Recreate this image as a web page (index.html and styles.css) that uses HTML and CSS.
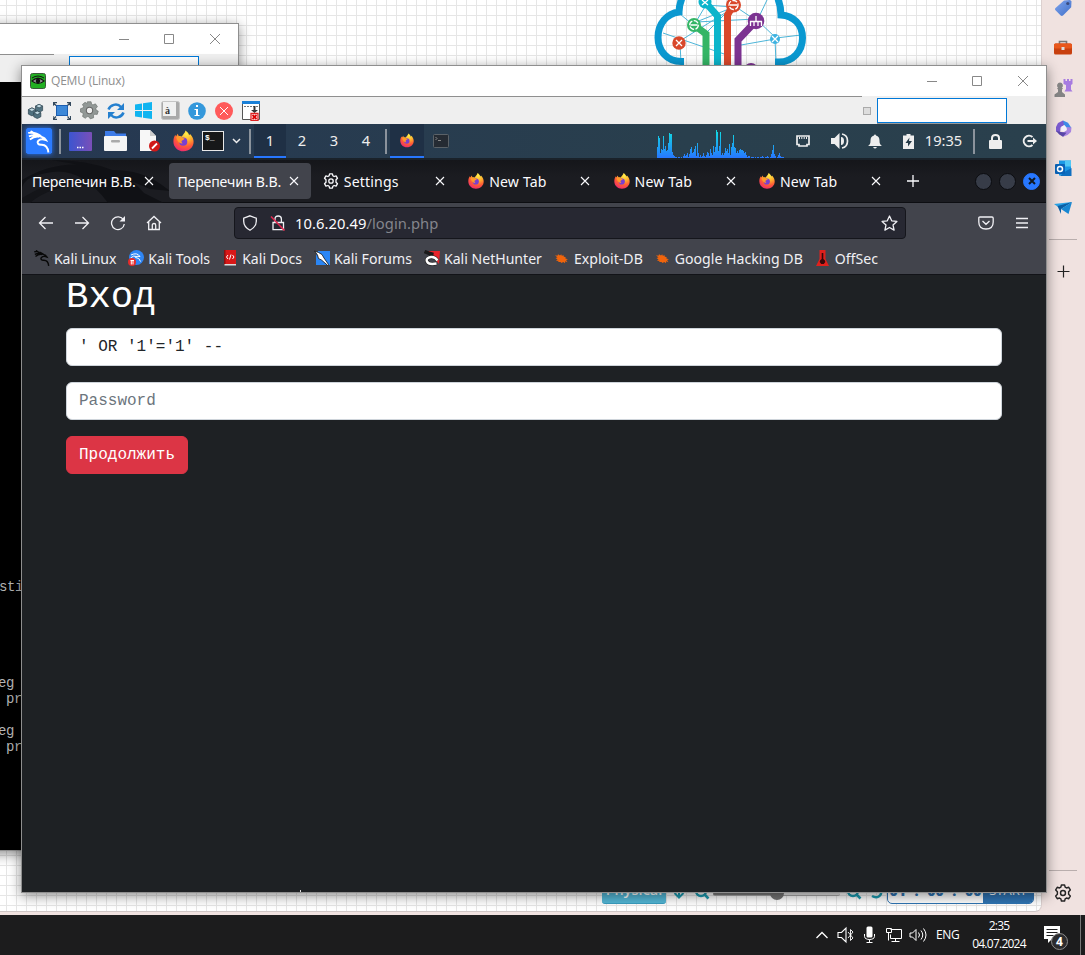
FILE: index.html
```html
<!DOCTYPE html>
<html lang="ru">
<head>
<meta charset="utf-8">
<title>QEMU (Linux)</title>
<link rel="stylesheet" href="styles.css">
</head>
<body>
<svg class="defs" width="0" height="0">
  <defs>
    <radialGradient id="fox" cx=".65" cy=".15" r=".95"><stop offset="0" stop-color="#fff04a"/><stop offset=".35" stop-color="#ffb02e"/><stop offset=".65" stop-color="#ff5a36"/><stop offset="1" stop-color="#e8207c"/></radialGradient>
    <linearGradient id="desk"><stop offset="0" stop-color="#3c55d0"/><stop offset="1" stop-color="#7a4fb8"/></linearGradient>
    <linearGradient id="cpu" gradientUnits="userSpaceOnUse" x1="0" y1="0" x2="0" y2="28"><stop offset="0" stop-color="#10e0e0"/><stop offset="1" stop-color="#2777ff"/></linearGradient>
    <linearGradient id="tagc" x1="0" y1="0" x2="1" y2="1"><stop offset="0" stop-color="#7fa4ee"/><stop offset="1" stop-color="#3f6fc8"/></linearGradient>
  </defs>
  <symbol id="firefox" viewBox="0 0 16 16">
    <path fill="url(#fox)" d="M8 15.800C3.600 15.800.3 12.600.3 8.300c0-2.300.7-4 1.500-5l.5 1.300L3.600 2.500l.8 1.800c.8-.2 1.600 0 2.300.3C7.500 3 9 2.300 9.500 0c1.700 1.200 2.500 2.200 2.800 3.600l.7-1c2 2 2.700 4 2.700 6 0 4.200-3.400 7.200-7.700 7.200z"/>
    <circle cx="7.800" cy="8.500" r="3.100" fill="#7a3fd0"/>
    <path fill="#ff9a2a" d="M2.500 4.800c1.300-.6 3-.4 4.200.6.6.5 1.200.5 2.200.6-.4 1-1.500 1.200-2 1.600-.8.500-.4 1.800.6 2.200-2 .6-4.300-1.200-5-5z"/>
  </symbol>
  <symbol id="x" viewBox="0 0 10 10"><path d="M1 1l8 8M9 1L1 9" fill="none" stroke="currentColor" stroke-width="1.100"/></symbol>
  <symbol id="gear" viewBox="0 0 16 16">
    <path fill="none" stroke="currentColor" stroke-width="1.300" stroke-linejoin="round" d="M6.600.8h2.800l.5 2 1.200.7 2-.6 1.400 2.400-1.500 1.500v2.400l1.500 1.500-1.400 2.400-2-.6-1.200.7-.5 2H6.600l-.5-2-1.200-.7-2 .6-1.400-2.400L3 9.200V6.800L1.500 5.300l1.400-2.400 2 .6 1.200-.7z"/>
    <circle cx="8" cy="8" r="2.200" fill="none" stroke="currentColor" stroke-width="1.300"/>
  </symbol>
  <symbol id="dragon" viewBox="0 0 16 16">
    <path fill="none" stroke="currentColor" stroke-width="1.400" d="M.3 1.800C4 1.300 7 2 9.500 4.200M.8 4.300C4 3 7 3.300 10 4.700c1.300.5 2.300 1 3 2.300-2-.8-4.500-.6-5.500.4-1.300 1.500 0 3 2.200 2.900 2.600-.1 4.600 1.800 5 5.500M2 .5l3 2M1.500 6.500C4 4.500 6 4.200 8 4.500"/>
  </symbol>
  <symbol id="bug" viewBox="0 0 16 16">
    <path fill="#f0640c" d="M1 5.200l2.500.6L4 4.200 6 5.500l1.200-1.200.6 1.400 1.800-.4.2 1.400 1.800.4-.2 1.400 2.600.8-1.900.7 1.400 2.300-2.300-1-.2 1.900-1.700-1.300-1.800 1.200-1-1.200-2.300.2.300-1.400-2.500.3L3.500 9.500 1.500 8l2-.4z"/>
  </symbol>
</svg>
<div class="desktop">
  <main class="backdrop">
    <section class="canvas">
      <svg class="cloud" width="160" height="72" viewBox="650 0 160 72" fill="none">
        <g stroke="#4db5d8" stroke-width="1"><path d="M663 33l67 23M694 25l12-20 28 2-38 15 60-3 20 19 25-3M680 14l12 10M680 43l1 20M683 39l50-31M706 33l24-24M741 45l34-6M775 39l1 24M733 5l24 16 10-21"/></g>
        <path stroke="#0a98d0" stroke-width="7" d="M684 61.500h-3c-14 0-23-11-23-24 0-14 9-24 21-25.500 0-5 1-9 3-14M775 62h4c14 0 23.500-11 23.500-24 0-14-9-22-21.500-23 0-6-1-11-3-16"/>
        <path stroke="#34b565" stroke-width="7" d="M694 25l12 9v38"/><path stroke="#0cb5cb" stroke-width="7" d="M705 2l12.500 14v56"/>
        <path stroke="#d9482b" stroke-width="7" d="M734 4l-6.500 11v57"/><path stroke="#7c3391" stroke-width="7" d="M756 21l-18 19v32"/>
        <circle cx="694" cy="25" r="7" fill="#34b565"/><circle cx="705" cy="2" r="6.500" fill="#0cb5cb"/><circle cx="733.500" cy="5" r="7.500" fill="#d9482b"/><circle cx="756" cy="21" r="8.300" fill="#7c3391"/><circle cx="679" cy="43" r="6.700" fill="#d9482b"/><circle cx="775" cy="39" r="5" fill="#3db2e0"/><circle cx="751" cy="70" r="7" fill="#7c3391"/>
        <g stroke="#fff" stroke-width="1.300"><circle cx="694" cy="25" r="4.300" stroke-dasharray="5 1.500"/><circle cx="733.500" cy="5" r="4.500" stroke-dasharray="5 1.500"/><path d="M676 40l6 6M682 40l-6 6M702 0l6 5M708 0l-6 5M772 36l6 6M778 36l-6 6M690.500 25h7M730 5h7M756 16v5M750 21.500h12M750.500 21v5M754 21v5M758 21v5M761.500 21v5"/></g>
      </svg>
      <div class="pt-bar">
        <span class="pt-physical">Physical</span>
        <svg class="pt-pin" width="12" height="22" viewBox="0 0 12 22" fill="none" stroke="#1b9bb0" stroke-width="2"><path d="M6 0v15M1.500 11L6 15.500l4.500-4.500"/></svg>
        <svg class="pt-zoom" width="16" height="22" viewBox="0 0 16 22" fill="none" stroke="#1b9bb0" stroke-width="2.500"><circle cx="7" cy="9" r="5"/><path d="M10.500 12.500l4 4"/></svg>
        <span class="pt-slider"><i></i></span>
        <svg class="pt-zoom" width="16" height="22" viewBox="0 0 16 22" fill="none" stroke="#1b9bb0" stroke-width="2.500"><circle cx="7" cy="9" r="5"/><path d="M10.500 12.500l4 4"/></svg>
        <svg class="pt-undo" width="14" height="22" viewBox="0 0 14 22" fill="none" stroke="#1b9bb0" stroke-width="2.500"><path d="M2 14c5 3 10 0 9-5-1-4-5-5-8-3"/></svg>
        <span class="pt-timer"><b>01 : 00 : 00</b><em>START</em></span>
      </div>
    </section>
    <aside class="edge-side">
      <div class="slot"><svg width="18" height="18" viewBox="0 0 18 18"><path fill="url(#tagc)" d="M10 1.500L16 1l1.500 1.200-.3 6L9 16.500c-.8.7-1.700.6-2.300 0L1.500 11.300c-.7-.7-.6-1.700 0-2.300z"/><circle cx="13.800" cy="4.500" r="1.600" fill="#3a4c80"/></svg></div>
      <div class="slot"><svg width="18" height="16" viewBox="0 0 18 16"><path d="M5.500 4V1.500h7V4" fill="none" stroke="#777" stroke-width="1.600"/><rect y="3.500" width="18" height="11" rx="1.500" fill="#c8400f"/><rect y="3.500" width="18" height="5" rx="1.500" fill="#e8571c"/><rect x="7.500" y="7" width="3" height="3" fill="#ddd"/></svg></div>
      <div class="slot"><svg width="19" height="18" viewBox="0 0 19 18"><path fill="#a77be0" d="M9.500 0h2v2H13V0h2v2h1.500V0h2v5l-1.500 1v4.500l1.500 2h-8L12 10V6L9.500 5z"/><path fill="#858585" d="M6 3.500a3 3 0 012 5.200l1 .8-1 1V13l3 2.500V18H.5v-2.500L4 13v-2.500l-1-1 1-.8a3 3 0 012-5.200z"/></svg></div>
      <div class="slot"><svg width="17" height="17" viewBox="0 0 17 17"><path fill="#3f8be8" d="M8 .5l5 2.300 3.300 5-3.800 1.200L9.500 5 6 5.500z"/><path fill="#7b5bd0" d="M8 .5L3 3 1 7v4.500l4 2 .5-6L9 5z"/><path fill="#a884e0" d="M11.500 7l5 .5-.5 4.500-3.500 3L8 16.800 5 13l4-1 3-2z"/><path fill="#5947a8" d="M1.200 11l3 3.500L8 16.800l3.500-4L6 12z"/><path fill="#f4f0fb" d="M6.500 6.500L9 5.500l2.500 2-.3 3-2.700 1.300L6 10.500z"/></svg></div>
      <div class="slot"><svg width="17" height="17" viewBox="0 0 17 17"><path fill="#1a9ae6" d="M4 .5h12v15H4z"/><path fill="#50c8f5" d="M10 .5h6v6h-6z"/><path fill="#0f6fc0" d="M5 16l6-5 5.500-3v8z"/><rect y="4" width="10" height="10" rx="1" fill="#0a63b8"/><circle cx="5" cy="9" r="2.500" fill="none" stroke="#fff" stroke-width="1.500"/></svg></div>
      <div class="slot"><svg width="18" height="15" viewBox="0 0 18 15"><path fill="#2aa4e8" d="M0 3L18 1 7 8z"/><path fill="#0b5fa5" d="M3.500 5L18 1 7 8v5z"/><path fill="#1787d2" d="M18 1l-3.500 12L7 8z"/></svg></div>
      <hr>
      <div class="plus"><svg width="13" height="13" viewBox="0 0 13 13"><path d="M6.500.5v12M.5 6.500h12" stroke="#222" stroke-width="1.200"/></svg></div>
      <div class="grow"></div>
      <hr>
      <div class="cog"><svg width="18" height="18"><use href="#gear"/></svg></div>
    </aside>
  </main>
  <footer class="taskbar">
    <svg width="24" height="20" viewBox="0 0 24 20" fill="none" stroke="#fff" stroke-width="1.300"><path d="M6.500 13L12 7.500l5.500 5.500"/></svg>
    <svg width="24" height="20" viewBox="0 0 24 20" fill="none" stroke="#fff" stroke-width="1.100"><path d="M4 7.500h3.500L12 3v14l-4.500-4.500H4z"/><path stroke-width=".9" d="M14 7l5 6-2.500 2.500v-11L19 7l-5 6"/></svg>
    <svg width="24" height="20" viewBox="0 0 24 20"><rect x="8.500" y="1.500" width="6" height="11" rx="1.500" fill="#fff"/><path d="M6.500 9v2.500c0 4 10 4 10 0V9M11.500 14.500v3M8.500 17.500h6" fill="none" stroke="#fff"/></svg>
    <svg width="24" height="20" viewBox="0 0 24 20" fill="none" stroke="#fff"><path d="M8.500 4.500h11v9h-11v-4M13.500 13.500v3M9.500 16.500h8"/><path d="M4.500 3.500h5v4h-5zM6.500 7.500v8"/></svg>
    <svg width="24" height="20" viewBox="0 0 24 20" fill="none" stroke="#fff"><path d="M4 8h2.500L10 4.500v11L6.500 12H4zM12.500 7.500q2 2.500 0 5M15 5.500q3.500 4.500 0 9M17.500 3.500q5 6.500 0 13"/></svg>
    <span class="lang">ENG</span>
    <span class="date">2:35<br>04.07.2024</span>
    <svg class="notify" width="26" height="28" viewBox="0 0 26 28"><path fill="#fff" d="M0 2h16v13H8l-4 4v-4H0z"/><path d="M2.500 5.500h11M2.500 8.500h11M2.500 11.500h7" stroke="#1c1c1d"/><circle cx="15.500" cy="17.500" r="8" fill="#2c2c2e" stroke="#8c8c8c"/><text x="15.500" y="22" class="count">4</text></svg>
    <i class="peek"></i>
  </footer>

  <section class="win win-back">
    <header class="caption"><span class="title"></span>
      <svg class="ctl" width="106" height="14" viewBox="0 0 106 14"><path d="M1 7.500h10M46.500 2.500h9v9h-9zM92 2l10 10M102 2L92 12" fill="none" stroke="#888"/></svg>
    </header>
    <div class="back-tools"><i class="field"></i></div>
    <div class="console">
      <div class="first">sti</div>
      <div class="in">eg</div>
      <div class="in pr">pr</div>
      <div class="in gap">eg</div>
      <div class="in pr">pr</div>
    </div>
  </section>

  <section class="win win-main">
    <header class="caption">
      <svg width="16" height="16" viewBox="0 0 16 16"><rect x=".5" y=".5" width="15" height="15" rx="2" fill="#22b022" stroke="#3a5a3a"/><path d="M1 8q7-7 14 0-7 6-14 0z" fill="#111"/><path d="M3 8q5-4 10 0-5 4-10 0z" fill="#9a9a9a"/><circle cx="8" cy="8" r="2.300" fill="#111"/><path d="M2 5q6-4 12 0" fill="none" stroke="#111"/></svg>
      <span class="title">QEMU (Linux)</span>
      <svg class="ctl" width="106" height="14" viewBox="0 0 106 14"><path d="M1 7.500h10M46.500 2.500h9v9h-9zM92 2l10 10M102 2L92 12" fill="none" stroke="#888"/></svg>
    </header>
    <div class="rule"></div>
    <div class="tools">
      <i><svg width="17" height="16" viewBox="0 0 18 18" stroke="#2d4450" stroke-width=".8"><path fill="#50717f" d="M9 3.500l4-2 4 2v5l-4 2-4-2z"/><path fill="#c3dbe4" d="M9 3.500l4-2 4 2-4 2z"/><path fill="#50717f" d="M1 7.500l4-2 4 2v5l-4 2-4-2z"/><path fill="#c3dbe4" d="M1 7.500l4-2 4 2-4 2z"/><path fill="#50717f" d="M7 11l4-2 4 2v4.500l-4 2-4-2z"/><path fill="#c3dbe4" d="M7 11l4-2 4 2-4 2z"/></svg></i>
      <i><svg width="18" height="18" viewBox="0 0 18 18"><rect x="3.500" y="3.500" width="11" height="10" fill="#3d88d8" stroke="#1c5db0"/><path d="M0 4V.5h4M14 .5h3.500V4M0 14v3.500h4M14 17.500h3.500V14M0 .5l3 3M17.500.5l-3 3M0 17.500l3-3M17.500 17.500l-3-3" stroke="#34495e" stroke-width="1.300" fill="none"/></svg></i>
      <i><svg width="19" height="19" viewBox="0 0 18 18"><path fill="#929896" stroke="#656b69" stroke-width=".6" d="M7 .7h3.500l.5 2.400 1.300.6 2.300-1 1.900 2.600-1.500 1.800.3 1.500 2 1-1 3.100-2.300-.2-1.200 1 .1 2.400-3.200 1-1.400-2-1.600-.1-1.700 1.600-2.600-1.800.7-2.300-.7-1.200L.5 10.500V7.300l2.300-.7.600-1.300-1.100-2 2.500-2 2 1.200z"/><circle cx="9" cy="9" r="3" fill="#efefef" stroke="#666"/></svg></i>
      <i><svg width="18" height="18" viewBox="0 0 18 18" fill="none" stroke="#2580cf" stroke-width="2.500"><path d="M1.500 7.500C3 3 10 .5 14 5M16.500 10.500C15 15 8 17.500 4 13"/><path fill="#2580cf" stroke="none" d="M17 1v7h-7zM1 17v-7h7z"/></svg></i>
      <i><svg width="17" height="17" viewBox="0 0 17 17" fill="#10b4f0"><path d="M0 2.500l7-1V8H0zM8 1.300L17 0v8H8zM0 9h7v6.500l-7-1zM8 9h9v8l-9-1.300z"/></svg></i>
      <i><svg width="19" height="19" viewBox="0 0 19 19"><rect x=".5" y=".5" width="18" height="18" rx="2" fill="#a9a9a9" stroke="#c5c5c5"/><path fill="#f0f0f0" d="M2 1h13v14H2z"/><text x="4" y="12.500" class="key">à</text></svg></i>
      <i><svg width="18" height="18" viewBox="0 0 18 18"><circle cx="9" cy="9" r="8.800" fill="#3498db"/><path fill="#fff" d="M8 3h2v2H8zM6.500 7H10v6h1.500v1h-5v-1H8V8H6.500z"/></svg></i>
      <i><svg width="18" height="18" viewBox="0 0 18 18"><circle cx="9" cy="9" r="9" fill="#ff5a5a"/><path d="M5 5l8 8M13 5l-8 8" stroke="#fff"/></svg></i>
      <i class="last"><svg width="19" height="20" viewBox="0 0 19 20"><path fill="#fff" stroke="#555" d="M.5 1.500h17v17H.5z"/><path fill="#1a80d8" d="M0 0h18v3H0z"/><path d="M2 5.500h14" stroke="#777" stroke-dasharray="2 1"/><path fill="#333" d="M11.500 5h2v4H16l-3.500 3L9 9h2.500z"/><path fill="#fff" stroke="#d22" stroke-width="1.300" d="M9 12.500h7v7H9z"/><path d="M10.500 14l4 4M14.500 14l-4 4" stroke="#d00" stroke-width="1.800"/></svg></i>
      <b class="mini"></b><b class="field"></b>
    </div>

    <div class="panel">
      <span class="w34"><svg class="kali" width="26" height="26" viewBox="-3 -3 22 22"><rect x="-3" y="-3" width="22" height="22" rx="1.500" fill="#2b7bff"/><g color="#fff"><use href="#dragon" x="-2" y="-1" width="20" height="19"/></g></svg></span>
      <i class="sep s1"></i>
      <span class="w35"><svg width="23" height="19" viewBox="0 0 23 19"><rect width="23" height="19" rx="1" fill="url(#desk)"/><path d="M8 15.500h7" stroke="#fff" stroke-width="1.500" stroke-dasharray="1.500 1"/></svg></span>
      <span class="w34"><svg width="23" height="20" viewBox="0 0 23 20"><path fill="#3d7be8" d="M1 0h9l2 2.500h10V10H1z"/><rect y="5" width="23" height="15" rx="1" fill="#f5f5f5"/><rect x="7" y="9" width="9" height="2.500" rx="1" fill="#aaa"/></svg></span>
      <span class="w34"><svg width="21" height="22" viewBox="0 0 21 22"><path fill="#f7f7f7" d="M1 0h10l6 6v15H1z"/><path fill="#ccc" d="M11 0l6 6h-6z"/><circle cx="15.500" cy="16" r="5.500" fill="#d01818"/><path d="M13 18.500l5-5" stroke="#fff" stroke-width="1.800"/></svg></span>
      <span class="w34"><svg width="21" height="22"><use href="#firefox"/></svg></span>
      <span class="w26"><svg width="22" height="20" viewBox="0 0 22 20"><rect x=".5" y=".5" width="21" height="19" fill="#171819" stroke="#e8e8e8"/><text x="3" y="9" class="prompt">$_</text></svg></span>
      <span class="w20"><svg width="9" height="6" viewBox="0 0 9 6"><path d="M1 1l3.500 3.500L8 1" fill="none" stroke="#eee" stroke-width="1.500"/></svg></span>
      <i class="sep s2"></i>
      <span class="ws on">1</span><span class="ws">2</span><span class="ws">3</span><span class="ws">4</span>
      <i class="sep s2"></i>
      <span class="w34 on"><svg width="14" height="15"><use href="#firefox"/></svg></span>
      <span class="w34"><svg width="16" height="14" viewBox="0 0 16 14"><rect x=".5" y=".5" width="15" height="13" rx="1" fill="#252b33" stroke="#5b6268"/><path d="M2.500 3l1.500 1.500L2.500 6M5 6.500h3" stroke="#888" fill="none"/></svg></span>
      <span class="grow"></span>
      <svg class="graph" width="128" height="34" viewBox="0 -6 128 34"><path fill="url(#cpu)" d="M0 28V17h1V6h1V8h1V23h1V19h1V20h1V6h1V19h1V16h1V21h1V20h1V13h1V3h1V4h2V22h1V25h1V26h1V27h2V28h1V27h2V28h1V27h1V28h1V26h1V24h1V26h1V25h1V23h1V27h1V24h1V19h1V17h1V23h1V22h1V19h1V16h1V26h1V13h1V23h1V27h1V25h1V27h1V26h1V23h1V26h1V27h1V25h1V22h1V23h1V26h1V19h1V23h1V25h1V16h1V22h1V17h1V0h1V2h1V21h1V16h1V2h1V25h1V23h1V25h1V23h1V18h1V21h1V19h1V23h1V14h1V25h1V17h1V13h1V5h1V17h1V18h1V23h1V21h1V23h1V20h1V19h1V20h2V21h1V23h1V22h1V25h1V27h1V26h2V28h1V27h3V28h1V27h1V28h1V27h2V28h1V27h2V26h1V27h1V28h1V27h2V26h1V27h1V28h1V27h1V24h1V20h1V15h1V24h1V26h1V28h1V27h1V25h1V23h1V26h1V27h3V28z"/></svg>
      <span class="w36"><svg width="14" height="13" viewBox="0 0 14 13"><path fill="none" stroke="#eee" stroke-width="1.700" d="M1 1h12v8.500h-2V11H3V9.500H1z"/><path d="M3.500 2v2M5.800 2v2M8.200 2v2M10.500 2v2" stroke="#eee"/></svg></span>
      <span class="w37"><svg width="18" height="16" viewBox="0 0 18 16"><path fill="#eee" d="M0 5h3.500L8.500 0v16l-5-5H0zM10 4q3 0 3 4t-3 4z"/><path d="M11 1q5.500 1 5.500 7T11 15" fill="none" stroke="#eee" stroke-width="1.700"/></svg></span>
      <span class="w34"><svg width="14" height="15" viewBox="0 0 14 15"><path fill="#eee" d="M6 1.500a1 1 0 012 0c2.500.5 3.500 2.500 3.500 5 0 3 .5 4 2.500 5.500H0c2-1.500 2.500-2.500 2.500-5.500 0-2.500 1-4.500 3.500-5zM5 13h4q-2 3-4 0z"/></svg></span>
      <span class="w32"><svg width="11" height="15" viewBox="0 0 11 15"><path fill="#eee" d="M3.500 0h4v1.500H11V15H0V1.500h3.500z"/><path fill="#263b48" d="M6.500 3.500L2.500 9H5v3.500L9 7H6z"/></svg></span>
      <span class="clock">19:35</span>
      <i class="sep s3"></i>
      <span class="w28"><svg width="13" height="15" viewBox="0 0 13 15"><rect y="6" width="13" height="9" rx="1" fill="#eee"/><path d="M3 7V4q0-3 3.500-3T10 4v3" fill="none" stroke="#eee" stroke-width="2"/></svg></span>
      <span class="out"><svg width="15" height="14" viewBox="0 0 15 14"><path d="M10.500 3A5.300 5.300 0 1010.500 11" fill="none" stroke="#eee" stroke-width="2"/><path fill="#eee" d="M5.500 6H11V3.500L15 7l-4 3.500V8H5.500z"/></svg></span>
    </div>

    <div class="tabs">
      <svg class="wall" width="160" height="43" viewBox="0 0 160 43"><path fill="#101115" d="M0 20Q30 2 62 5q40 4 60 28l20 10H86Q60 8 30 12T0 30zM30 0q35 0 60 10 30 0 50 15l8 6-20-2Q90 12 58 5z"/><path fill="#141519" d="M0 38Q40 14 78 20l-10 6Q30 24 8 43H0z"/></svg>
      <div class="tab"><span class="cyr">Перепечин В.В.</span><svg width="10" height="10"><use href="#x"/></svg></div>
      <div class="tab active"><span class="cyr">Перепечин В.В.</span><svg width="10" height="10"><use href="#x"/></svg></div>
      <div class="tab"><svg class="fav" width="16" height="16"><use href="#gear"/></svg><span>Settings</span><svg width="10" height="10"><use href="#x"/></svg></div>
      <div class="tab"><svg class="fav" width="16" height="16"><use href="#firefox"/></svg><span>New Tab</span><svg width="10" height="10"><use href="#x"/></svg></div>
      <div class="tab"><svg class="fav" width="16" height="16"><use href="#firefox"/></svg><span>New Tab</span><svg width="10" height="10"><use href="#x"/></svg></div>
      <div class="tab"><svg class="fav" width="16" height="16"><use href="#firefox"/></svg><span>New Tab</span><svg width="10" height="10"><use href="#x"/></svg></div>
      <svg class="new" width="12" height="12" viewBox="0 0 12 12"><path d="M6 0v12M0 6h12" stroke="#fbfbfe" stroke-width="1.300"/></svg>
      <span class="grow"></span>
      <b class="dot"></b><b class="dot"></b><b class="dot close"><svg width="8" height="8" viewBox="0 0 8 8"><path d="M1 1l6 6M7 1L1 7" stroke="#101820" stroke-width="2"/></svg></b>
    </div>

    <div class="nav">
      <i><svg width="16" height="16" viewBox="0 0 16 16"><path d="M15 8H1.500M7.500 2l-6 6 6 6"/></svg></i>
      <i><svg width="16" height="16" viewBox="0 0 16 16"><path d="M1 8h13.500M8.500 2l6 6-6 6"/></svg></i>
      <i><svg width="16" height="16" viewBox="0 0 16 16"><path d="M13.500 5A6.400 6.400 0 1014.300 9"/><path class="solid" d="M15 1v5.500H9.500z"/></svg></i>
      <i><svg width="16" height="16" viewBox="0 0 16 16"><path d="M1 8l7-6.500L15 8M2.700 7v7.500h10.600V7M6.300 14.500V10q0-1.500 1.700-1.500T9.700 10v4.500"/></svg></i>
      <div class="url">
        <svg width="16" height="16" viewBox="0 0 16 16"><path d="M8 .8l6.300 2.400v3q0 5.500-6.300 9-6.300-3.500-6.300-9v-3z"/></svg>
        <svg class="lock" width="16" height="16" viewBox="0 0 16 16"><path d="M3 7.500h10.500v7.200H3zM5 7V4q0-3 3.200-3t3.200 3v3"/><path d="M1 1.500l13.500 14" stroke="#e22850" stroke-width="1.600"/></svg>
        <span>10.6.20.49<em>/login.php</em></span>
        <svg class="star" width="17" height="17" viewBox="0 0 17 17"><path stroke-linejoin="round" d="M8.500 1l2.200 4.800 5.200.6-3.900 3.500 1.100 5.200-4.600-2.600-4.600 2.600L5 9.900 1.100 6.400l5.200-.6z"/></svg>
      </div>
      <span class="grow"></span>
      <i><svg width="16" height="14" viewBox="0 0 16 14"><path d="M2 1h12q1.200 0 1.200 1.200V6q0 7-7.200 7T.8 6V2.200Q.8 1 2 1zM4.500 5L8 8.300 11.500 5"/></svg></i>
      <i><svg width="12" height="12" viewBox="0 0 12 12"><path d="M0 1.500h12M0 6h12M0 10.500h12"/></svg></i>
    </div>
    <div class="marks">
      <span class="black"><svg width="16" height="16"><use href="#dragon"/></svg>Kali Linux</span>
      <span><svg width="16" height="16" viewBox="0 0 16 16"><circle cx="8.500" cy="7.500" r="7.500" fill="#2f86f5"/><path d="M3 5q6-3 9 1.500-4-1-4.500 1 4 0 5 4M2.500 8q3-3 6-1.500" stroke="#fff" fill="none"/><circle cx="4" cy="12" r="4" fill="#e62b2b"/><path d="M2.500 10.500h3.500M3.300 10.500v4M5 10.500v4" stroke="#fff"/></svg>Kali Tools</span>
      <span><svg width="16" height="16" viewBox="0 0 16 16"><path fill="#d81818" d="M2 0h12v14H2z"/><path fill="#8c1010" d="M2 0h1.500v15H2z"/><path fill="#ddd" d="M2.500 14H14v1.500H2.500z"/><path d="M6 5L4.500 7 6 9M10.500 5L12 7l-1.500 2M9 4.500l-1.500 5" stroke="#fff" fill="none"/></svg>Kali Docs</span>
      <span><svg width="16" height="16" viewBox="0 0 16 16"><path fill="#2b86f5" d="M4 1h12v14H2V6z"/><path fill="#fff" stroke="#111" stroke-width=".8" d="M.5 1l4 1.500L8 4.500l2 3.500 4.500 6.500-1 .8L7.500 10 4.500 8.500 3.500 5z"/></svg>Kali Forums</span>
      <span><svg width="16" height="16" viewBox="0 0 16 16"><path fill="#e8252c" d="M4 1h12l-1 13z"/><path d="M.5 1.500q4 2 9 3M12.500 13.500q-8 1.500-9.500-2t4-4.500q4-.5 6.500 3.500" stroke="#1a1a1a" stroke-width="3.600" fill="none"/><path d="M12.500 13.500q-8 1.500-9.500-2t4-4.500q4-.5 6.500 3.500" stroke="#fff" stroke-width="2.400" fill="none"/></svg>Kali NetHunter</span>
      <span><svg width="16" height="16"><use href="#bug"/></svg>Exploit-DB</span>
      <span><svg width="16" height="16"><use href="#bug"/></svg>Google Hacking DB</span>
      <span><svg width="16" height="16" viewBox="0 0 16 16"><path fill="#e0201c" d="M4.500 0h6v9l3.500 7H1l3.500-7z"/><path fill="#35080a" d="M6.700 3h1.600v6q2 1 2 3l-1.500 2H6.200L4.700 12q0-2 2-3z"/></svg>OffSec</span>
    </div>
    <div class="page">
      <form class="login">
        <h1>Вход</h1>
        <input type="text" value="' OR '1'='1' -- ">
        <input type="password" placeholder="Password">
        <button type="button">Продолжить</button>
      </form>
    </div>
    <i class="cursor"></i>
  </section>
</div>
</body>
</html>
```

FILE: styles.css
```css
* { box-sizing: border-box; }
body { margin: 0; overflow: hidden; background: #f0e2e0; font-family: "Noto Sans", sans-serif; }
svg { display: block; flex: none; }
i, em { font-style: normal; }
.defs { position: absolute; }
.grow { flex: 1; }
.desktop { position: relative; width: 1085px; height: 955px; overflow: hidden; display: flex; flex-direction: column; }

.backdrop { flex: 1; display: flex; min-height: 0; }
.canvas {
  width: 1042px; height: 912px; display: flex; flex-direction: column; justify-content: space-between;
  border-right: 1px solid #dcd0cf; border-bottom: 1px solid #cfc6c5; border-radius: 0 0 7px 0;
  background-color: #fff;
  background-image: linear-gradient(90deg, #e6e6e6 1px, transparent 1px), linear-gradient(#e6e6e6 1px, transparent 1px);
  background-size: 10px 10px; background-position: 6px 5px;
}
.cloud { margin-left: 650px; }
.pt-bar { display: flex; align-items: flex-end; height: 32px; margin: 0 0 7px 602px; font: 700 15px "Open Sans", sans-serif; }
.pt-physical { width: 64px; height: 32px; line-height: 16px; color: #fff; background: #54b7d6; text-align: center; border-radius: 3px; border-bottom: 1px solid #3a9fc0; padding-top: 10px; font-size: 14.5px; font-weight: 600; }
.pt-pin { margin-left: 7px; }
.pt-zoom { margin-left: 9px; }
.pt-slider { width: 127px; height: 4px; margin: 0 0 8px 3px; background: linear-gradient(90deg, #7b7b7b 50%, #e6e6e6 50%); border-bottom: 1px solid #aaa; border-radius: 2px; display: flex; justify-content: center; align-items: flex-end; }
.pt-slider i { width: 14px; height: 14px; border-radius: 7px; background: #757575; margin-bottom: -5px; flex: none; }
.pt-zoom + .pt-undo { margin-left: 8px; }
.pt-slider + .pt-zoom { margin-left: 6px; }
.pt-timer { margin-left: 3px; width: 147px; height: 32px; display: flex; border: 1px solid #2f74b3; border-radius: 5px; background: #fff; color: #2f74b3; line-height: 35px; overflow: hidden; white-space: pre; }
.pt-timer b { width: 95px; text-align: center; word-spacing: 5px; font-size: 14px; }
.pt-timer em { flex: 1; background: #2f74b3; color: #fff; text-align: center; font-weight: 400; font-size: 13px; }

.edge-side { width: 43px; height: 927px; display: flex; flex-direction: column; align-items: center; margin-top: -12px; padding-right: 1px; }
.slot { height: 40px; display: flex; align-items: center; }
.edge-side hr { width: 28px; height: 1px; border: 0; background: #b9aead; margin: 11px 0 0; }
.plus { margin-top: 25px; }
.cog { height: 44px; display: flex; align-items: center; color: #252525; padding-bottom: 1px; }

.taskbar { height: 40px; background: #1c1c1d; display: flex; align-items: center; padding-left: 810px; color: #fff; font: 12px/18px "Open Sans", sans-serif; }
.lang { width: 26px; margin-left: 6px; letter-spacing: -.4px; }
.date { width: 64px; margin-left: 5px; text-align: center; letter-spacing: -.75px; }
.notify { margin: 6px 0 0 13px; }
.count { font: 700 12px "Open Sans", sans-serif; fill: #fff; text-anchor: middle; }
.peek { width: 1px; height: 40px; margin-left: 10px; background: #777; }

.win { position: absolute; border: 1px solid #8f8f8f; background: #fff; box-shadow: 0 3px 12px rgba(0,0,0,.45); overflow: hidden; }
.win-back { left: -787px; top: 23px; width: 1026px; height: 828px; display: flex; flex-direction: column; }
.win-main { left: 21px; top: 65px; width: 1026px; height: 828px; display: flex; flex-direction: column; }
.caption { height: 30px; flex: none; display: flex; align-items: center; padding: 0 14px 0 8px; font: 12px "Open Sans", sans-serif; color: #8e8e8e; }
.title { flex: 1; margin-left: 5px; letter-spacing: -.2px; padding-bottom: 1px; }
.back-tools { height: 28px; background: linear-gradient(#8f8f8f, #8f8f8f) 0 0 / 840px 1px no-repeat #efefef; display: flex; justify-content: flex-end; padding: 2px 39px 0 0; }
.field { width: 130px; height: 25px; background: #fff; border: 1px solid #0078d7; }
.console { flex: 1; background: #000; color: #b4b4b4; font: 14px/16px "Liberation Mono", monospace; letter-spacing: -.4px; padding: 497px 0 0 785px; }
.console .first { margin-bottom: 80px; }
.console .in { margin-left: -1px; }
.console .pr { padding-left: 8px; }
.console .gap { margin-top: 16px; }

.rule { flex: none; height: 1px; background: linear-gradient(90deg, #8f8f8f 840px, #efefef 840px); }
.tools { flex: none; height: 27px; background: #efefef; display: flex; align-items: center; }
.tools i { width: 27px; padding-right: 1px; display: flex; justify-content: center; }
.tools .last { padding-right: 0; }
.key { font: 700 10px "Liberation Serif", serif; fill: #333; }
.mini { width: 8px; height: 8px; background: #ddd; border: 1px solid #aaa; margin: 1px 6px 0 auto; }
.tools .field { margin-right: 39px; align-self: flex-start; margin-top: 1px; box-shadow: 0 1px #999; height: 25px; }

.panel { flex: none; height: 36px; border-bottom: 2px solid #1a222a; background: linear-gradient(90deg, #263852, #293f4d 65%, #2a404d); display: flex; align-items: center; color: #eee; font-size: 14.67px; }
.panel span { display: flex; justify-content: center; align-items: center; height: 34px; flex: none; }
.panel .grow { flex: 1; }
.kali { box-shadow: 0 0 5px #2777ff; }
.prompt { font: 700 8px "Liberation Mono", monospace; fill: #fff; }
.w20 { width: 20px; } .w26 { width: 26px; } .w28 { width: 28px; } .w32 { width: 33px; } .w34 { width: 34px; } .w35 { width: 35px; } .w36 { width: 36px; } .w37 { width: 37px; }
.sep { width: 2px; height: 25px; background: #8b939c; flex: none; }
.s1 { margin: 0 2px 0 3px; } .s2 { margin: 0 3px; }
.s3 { margin: 0 6px 0 11px; }
.panel .ws { width: 32px; padding-bottom: 2px; }
.panel .clock { width: 37px; padding-bottom: 2px; }
.panel .on { background: #1f3045; border-bottom: 2px solid #2777ff; padding: 1px 0 0; }
.panel .ws.on { padding: 0; }
.graph { align-self: flex-start; }
.out { width: 37px; padding-left: 3px; }

.tabs { position: relative; flex: none; height: 43px; background: linear-gradient(#15161a, #1b1c21 40%); border-bottom: 1px solid #0d0e12; display: flex; align-items: center; color: #fbfbfe; font-size: 14.1px; padding: 0 6px 0 2px; }
.wall { position: absolute; left: 0; top: 0; }
.tab { position: relative; width: 142px; height: 36px; margin-right: 3.4px; padding: 0 12px 0 8px; display: flex; align-items: center; border-radius: 4px; flex: none; white-space: nowrap; }
.tab span { flex: 1; letter-spacing: .15px; }
.tab .cyr { letter-spacing: -.15px; }
.tab.active { background: #42444c; }
.fav { margin-right: 5px; }
.new { margin-left: 11px; }
.dot { width: 17px; height: 17px; border-radius: 9px; background: #373c48; border: 1px solid #0b0c10; margin-left: 7px; display: flex; align-items: center; justify-content: center; }
.dot.close { background: #2777ff; border-color: #2777ff; }

.nav { flex: none; height: 40px; background: #42444c; display: flex; align-items: center; padding: 0 6px; color: #fbfbfe; }
.nav i { width: 36px; display: flex; justify-content: center; }
.nav svg { fill: none; stroke: #f0f0f4; stroke-width: 1.3; }
.nav .solid { fill: #f0f0f4; stroke: none; }
.url { width: 672px; height: 32px; margin-left: 62px; background: #272832; border: 1px solid #15161c; border-radius: 4px; display: flex; align-items: center; padding: 0 7px; font-size: 14.75px; }
.url .lock { margin: 0 9px 0 12px; }
.url span { flex: 1; letter-spacing: .05px; }
.url em { color: #84858c; }
.marks { flex: none; height: 32px; background: #42444c; border-bottom: 1px solid #121318; display: flex; align-items: center; gap: 12px; padding: 0 12px 1px; color: #f0f0f4; font-size: 14.1px; white-space: nowrap; }
.marks span { display: flex; align-items: center; gap: 4px; }
.marks .black { letter-spacing: -.12px; }
.marks .black svg { color: #080808; }

.page { flex: 1; background: #1e2124; }
.login { width: 936px; margin: 0 auto; font-family: "Liberation Mono", monospace; }
.login h1 { margin: 0 0 8px; font-size: 37.36px; font-weight: 400; line-height: 44.8px; color: #fff; }
.login input { display: block; width: 100%; height: 38px; margin: 0 0 16px; padding: 6px 12px; border: 1px solid #ced4da; border-radius: 6px; background: #fff; color: #212529; font: 16px/24px "Liberation Mono", monospace; }
.login input::placeholder { color: #6c757d; opacity: 1; }
.login button { display: block; height: 38px; padding: 0 12px; border: 1px solid #dc3545; border-radius: 6px; background: #dc3545; color: #fff; font: 16px/24px "Liberation Mono", monospace; }
.cursor { position: absolute; left: 278px; bottom: 0; width: 1px; height: 2px; background: #ddd; }
```
